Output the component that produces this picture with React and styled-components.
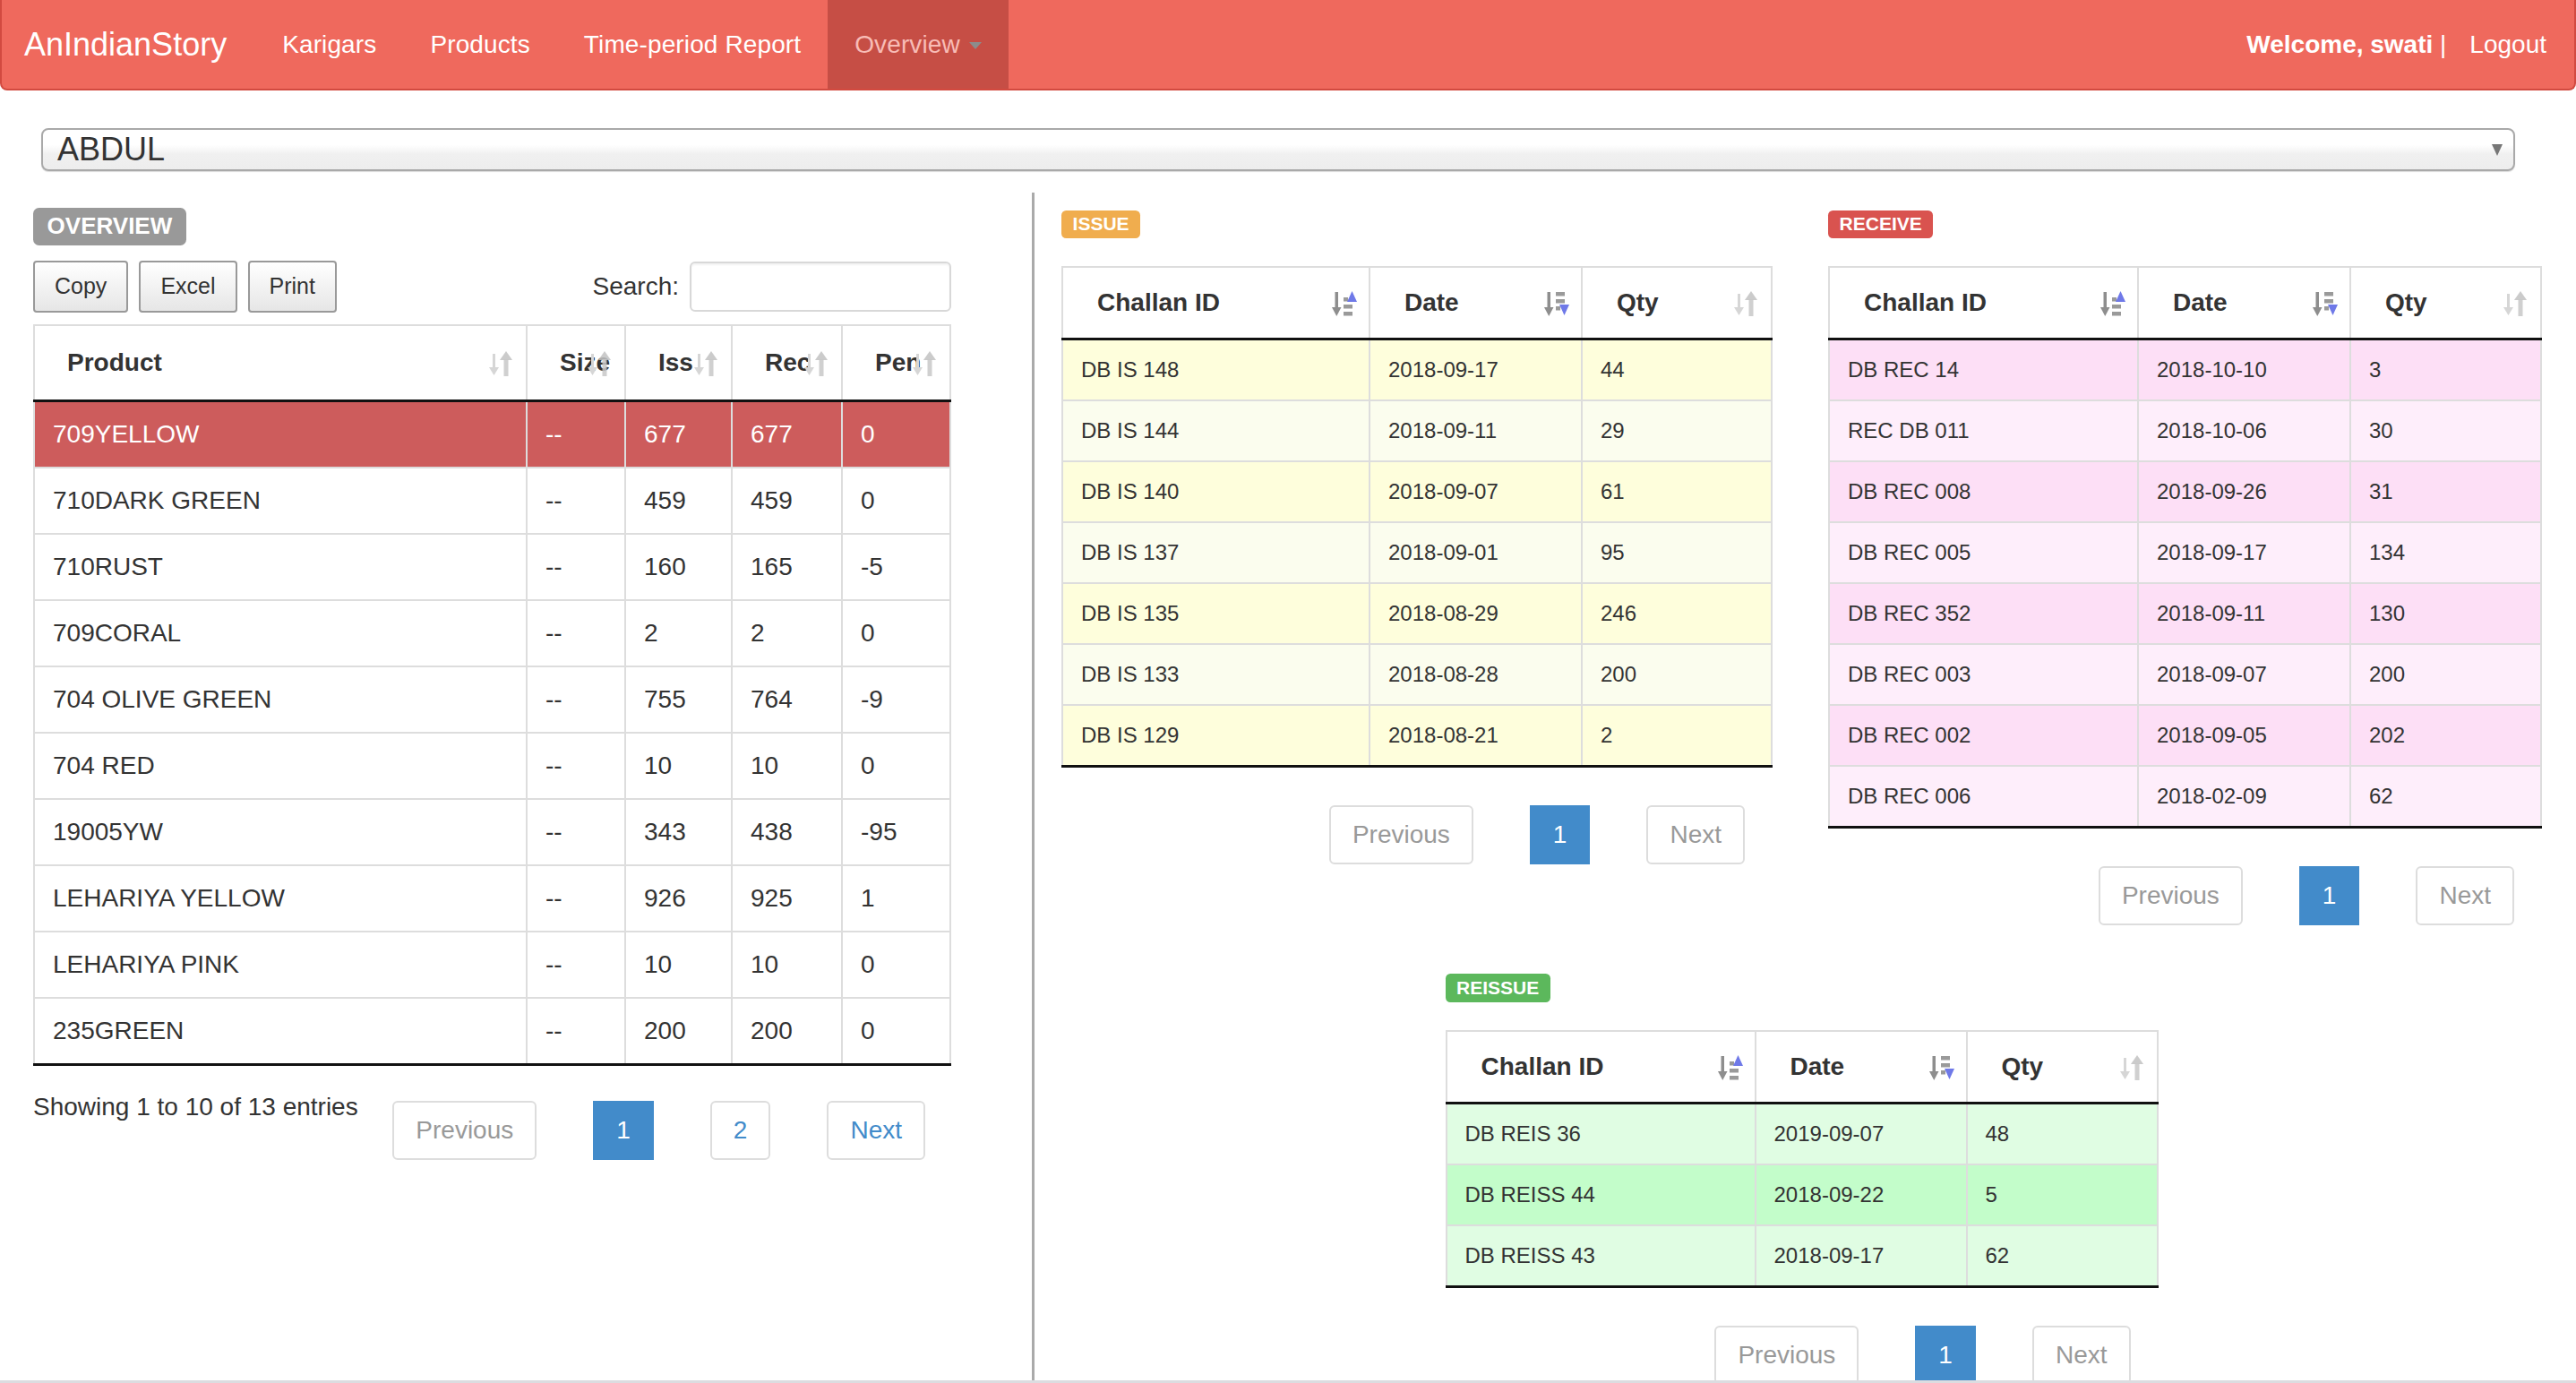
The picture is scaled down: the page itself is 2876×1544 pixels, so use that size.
import React from 'react'
import styled, { createGlobalStyle } from 'styled-components'

const GlobalStyle = createGlobalStyle`
  * { box-sizing: border-box; }
  html, body { margin: 0; padding: 0; background: #fff; }
  body {
    font-family: "Liberation Sans", Arial, Helvetica, sans-serif;
    font-size: 28px;
    line-height: 40px;
    color: #333;
  }
`

const products = [
  ['709YELLOW', '--', '677', '677', '0'],
  ['710DARK GREEN', '--', '459', '459', '0'],
  ['710RUST', '--', '160', '165', '-5'],
  ['709CORAL', '--', '2', '2', '0'],
  ['704 OLIVE GREEN', '--', '755', '764', '-9'],
  ['704 RED', '--', '10', '10', '0'],
  ['19005YW', '--', '343', '438', '-95'],
  ['LEHARIYA YELLOW', '--', '926', '925', '1'],
  ['LEHARIYA PINK', '--', '10', '10', '0'],
  ['235GREEN', '--', '200', '200', '0'],
]

const issues = [
  ['DB IS 148', '2018-09-17', '44'],
  ['DB IS 144', '2018-09-11', '29'],
  ['DB IS 140', '2018-09-07', '61'],
  ['DB IS 137', '2018-09-01', '95'],
  ['DB IS 135', '2018-08-29', '246'],
  ['DB IS 133', '2018-08-28', '200'],
  ['DB IS 129', '2018-08-21', '2'],
]

const receives = [
  ['DB REC 14', '2018-10-10', '3'],
  ['REC DB 011', '2018-10-06', '30'],
  ['DB REC 008', '2018-09-26', '31'],
  ['DB REC 005', '2018-09-17', '134'],
  ['DB REC 352', '2018-09-11', '130'],
  ['DB REC 003', '2018-09-07', '200'],
  ['DB REC 002', '2018-09-05', '202'],
  ['DB REC 006', '2018-02-09', '62'],
]

const reissues = [
  ['DB REIS 36', '2019-09-07', '48'],
  ['DB REISS 44', '2018-09-22', '5'],
  ['DB REISS 43', '2018-09-17', '62'],
]

const SortIcon = ({ dir }) => {
  if (dir === 'asc') {
    return (
      <SortSvg viewBox="0 0 28 32">
        <rect x="3.5" y="3" width="3.5" height="19" fill="#8e8e8e" />
        <polygon points="0,20 10.5,20 5.25,30" fill="#8e8e8e" />
        <rect x="13" y="9" width="5" height="4.5" fill="#9a9a9a" />
        <rect x="13" y="17" width="10" height="4.5" fill="#9a9a9a" />
        <rect x="13" y="25" width="10" height="4.5" fill="#9a9a9a" />
        <polygon points="17,14 28,14 22.5,2" fill="#6f79e8" />
      </SortSvg>
    )
  }
  if (dir === 'desc') {
    return (
      <SortSvg viewBox="0 0 28 32">
        <rect x="3.5" y="3" width="3.5" height="19" fill="#8e8e8e" />
        <polygon points="0,20 10.5,20 5.25,30" fill="#8e8e8e" />
        <rect x="13" y="3" width="10" height="4.5" fill="#9a9a9a" />
        <rect x="13" y="11" width="10" height="4.5" fill="#9a9a9a" />
        <rect x="13" y="19" width="5" height="4.5" fill="#9a9a9a" />
        <polygon points="17,17 28,17 22.5,29" fill="#6f79e8" />
      </SortSvg>
    )
  }
  return (
    <SortSvg viewBox="0 0 28 32">
      <rect x="4" y="5" width="3" height="17" fill="#d6d6d6" />
      <polygon points="0,20 11,20 5.5,29" fill="#d6d6d6" />
      <polygon points="12,12 26,12 19,2" fill="#c2c2c2" opacity="0.85" />
      <rect x="16.5" y="11" width="5" height="19" fill="#c8c8c8" opacity="0.85" />
    </SortSvg>
  )
}

const Pagination = ({ pages, current, nextEnabled }) => (
  <Pager>
    <PageBtn $disabled>Previous</PageBtn>
    {pages.map((p) => (
      <PageBtn key={p} $active={p === current}>{p}</PageBtn>
    ))}
    <PageBtn $disabled={!nextEnabled}>Next</PageBtn>
  </Pager>
)

const ChallanTable = ({ widths, rows, colors }) => (
  <Table $font={24}>
    <colgroup>
      {widths.map((w, i) => <Col key={i} $w={w} />)}
    </colgroup>
    <thead>
      <tr>
        <Th $pad={38}>Challan ID<SortIcon dir="asc" /></Th>
        <Th $pad={38}>Date<SortIcon dir="desc" /></Th>
        <Th $pad={38}>Qty<SortIcon /></Th>
      </tr>
    </thead>
    <tbody>
      {rows.map((r, i) => (
        <Row key={r[0]} $bg={colors[i % colors.length]}>
          {r.map((c, j) => <Td key={j} $lh={34}>{c}</Td>)}
        </Row>
      ))}
    </tbody>
  </Table>
)

const App = () => {
  return (
    <>
      <GlobalStyle />
      <Navbar>
        <NavLeft>
          <Brand>AnIndianStory</Brand>
          <NavLink>Karigars</NavLink>
          <NavLink>Products</NavLink>
          <NavLink>Time-period Report</NavLink>
          <NavLink $active>Overview<Caret /></NavLink>
        </NavLeft>
        <NavRight>
          <Welcome><b>Welcome, swati</b> |</Welcome>
          <Logout>Logout</Logout>
        </NavRight>
      </Navbar>

      <Picker>
        <span>ABDUL</span>
        <PickerArrow />
      </Picker>

      <Main>
        <LeftCol>
          <Label $bg="#999" $big>OVERVIEW</Label>
          <Toolbar>
            <BtnGroup>
              <Btn>Copy</Btn>
              <Btn>Excel</Btn>
              <Btn>Print</Btn>
            </BtnGroup>
            <SearchWrap>
              Search:
              <SearchInput />
            </SearchWrap>
          </Toolbar>
          <Table $font={28}>
            <colgroup>
              {[550, 110, 119, 123, 121].map((w, i) => <Col key={i} $w={w} />)}
            </colgroup>
            <thead>
              <tr>
                {['Product', 'Size', 'Iss', 'Rec', 'Pen'].map((h) => (
                  <Th key={h} $pad={36} $tall>{h}<SortIcon /></Th>
                ))}
              </tr>
            </thead>
            <tbody>
              {products.map((r, i) => (
                <Row key={r[0]} $bg={i === 0 ? '#cd5c5c' : '#fff'} $color={i === 0 ? '#fff' : '#333'}>
                  {r.map((c, j) => <Td key={j} $lh={40}>{c}</Td>)}
                </Row>
              ))}
            </tbody>
          </Table>
          <Footer $tight>
            <Info>Showing 1 to 10 of 13 entries</Info>
            <Pagination pages={[1, 2]} current={1} nextEnabled />
          </Footer>
        </LeftCol>

        <RightCol>
          <Grid>
            <Block>
              <Label $bg="#f0ad4e">ISSUE</Label>
              <TableGap />
              <ChallanTable widths={[343, 237, 212]} rows={issues} colors={['#fefedc', '#fbfdee']} />
              <Footer $end>
                <Pagination pages={[1]} current={1} />
              </Footer>
            </Block>
            <Block>
              <Label $bg="#d9534f">RECEIVE</Label>
              <TableGap />
              <ChallanTable widths={[345, 237, 213]} rows={receives} colors={['#fddff6', '#feeefb']} />
              <Footer $end>
                <Pagination pages={[1]} current={1} />
              </Footer>
            </Block>
            <Block $wide>
              <Label $bg="#5cb85c">REISSUE</Label>
              <TableGap />
              <ChallanTable widths={[345, 236, 213]} rows={reissues} colors={['#e0fde3', '#c3fdca']} />
              <Footer $end>
                <Pagination pages={[1]} current={1} />
              </Footer>
            </Block>
          </Grid>
        </RightCol>
      </Main>
      <BottomEdge />
    </>
  )
}

export default App

const Navbar = styled.nav`
  display: flex;
  justify-content: space-between;
  align-items: stretch;
  height: 101px;
  padding: 0 31px 0 25px;
  background: #ef695d;
  border: 2px solid #d24a40;
  border-top: 0;
  border-radius: 0 0 8px 8px;
`
const NavLeft = styled.div`
  display: flex;
  align-items: stretch;
`
const Brand = styled.div`
  display: flex;
  align-items: center;
  padding-right: 32px;
  font-size: 36px;
  color: #fff;
`
const NavLink = styled.div`
  display: flex;
  align-items: center;
  gap: 10px;
  padding: 0 30px;
  font-size: 28px;
  letter-spacing: 0.12px;
  color: ${(p) => (p.$active ? '#f8bcb6' : '#fff')};
  background: ${(p) => (p.$active ? '#c64e45' : 'transparent')};
`
const Caret = styled.span`
  display: inline-block;
  width: 0;
  height: 0;
  margin-top: 2px;
  border-left: 7px solid transparent;
  border-right: 7px solid transparent;
  border-top: 8px solid #8c8c8c;
`
const NavRight = styled.div`
  display: flex;
  align-items: center;
  color: #fff;
  font-size: 28px;
`
const Welcome = styled.span`
  white-space: pre;
`
const Logout = styled.span`
  margin-left: 26px;
`

const Picker = styled.div`
  display: flex;
  align-items: center;
  justify-content: space-between;
  width: 2762px;
  height: 48px;
  margin: 42px 0 0 46px;
  padding: 0 12px 0 16px;
  border: 2px solid #a9a9a9;
  border-radius: 8px;
  background: linear-gradient(to bottom, #ffffff 0%, #ffffff 38%, #f0f0f0 62%, #ededed 100%);
  box-shadow: 0 1px 1px rgba(0, 0, 0, 0.15);
  font-size: 36px;
  line-height: 44px;
  color: #333;
`
const PickerArrow = styled.span`
  width: 0;
  height: 0;
  border-left: 6px solid transparent;
  border-right: 6px solid transparent;
  border-top: 13px solid #777;
`

const Main = styled.div`
  display: flex;
  margin-top: 24px;
`
const LeftCol = styled.div`
  flex: 0 0 1150px;
  padding: 17px 90px 0 37px;
`
const RightCol = styled.div`
  flex: 1;
  min-height: 1340px;
  padding: 20px 42px 0 30px;
  border-left: 3px solid #aaa;
`

const Label = styled.div`
  display: block;
  width: fit-content;
  padding: ${(p) => (p.$big ? '0.25em 0.6em 0.35em' : '0.2em 0.6em 0.3em')};
  border-radius: 0.25em;
  background: ${(p) => p.$bg};
  color: #fff;
  font-weight: 700;
  font-size: ${(p) => (p.$big ? 26 : 21)}px;
  line-height: 1;
`
const TableGap = styled.div`
  height: 31px;
`

const Toolbar = styled.div`
  display: flex;
  justify-content: space-between;
  align-items: center;
  height: 58px;
  margin: 17px 0 13px;
`
const BtnGroup = styled.div`
  display: flex;
  gap: 12px;
`
const Btn = styled.button`
  height: 58px;
  padding: 0 22px;
  border: 2px solid #999;
  border-radius: 4px;
  background: linear-gradient(to bottom, #ffffff 0%, #e6e6e6 100%);
  font-family: inherit;
  font-size: 25px;
  color: #333;
`
const SearchWrap = styled.label`
  display: flex;
  align-items: center;
  gap: 12px;
  font-size: 28px;
`
const SearchInput = styled.input`
  width: 292px;
  height: 56px;
  border: 2px solid #d8d8d8;
  border-radius: 6px;
  box-shadow: inset 0 2px 2px rgba(0, 0, 0, 0.05);
  outline: 0;
`

const Table = styled.table`
  width: 100%;
  table-layout: fixed;
  border-collapse: collapse;
  border: 2px solid #ddd;
  border-bottom: 3px solid #111;
  font-size: ${(p) => p.$font}px;
`
const Col = styled.col`
  width: ${(p) => p.$w}px;
`
const Th = styled.th`
  position: relative;
  padding: ${(p) => (p.$tall ? 21 : 19)}px 40px ${(p) => (p.$tall ? 21 : 19)}px ${(p) => p.$pad}px;
  border: 2px solid #ddd;
  border-bottom: 3px solid #111;
  text-align: left;
  font-size: 28px;
  line-height: 40px;
  font-weight: 700;
  white-space: nowrap;
  color: #333;
  background: #fff;
`
const SortSvg = styled.svg`
  position: absolute;
  right: 13px;
  top: 50%;
  width: 28px;
  height: 32px;
  margin-top: -15px;
`
const Row = styled.tr`
  background: ${(p) => p.$bg};
  color: ${(p) => p.$color || '#333'};
`
const Td = styled.td`
  padding: 16px 20px;
  border: 2px solid #ddd;
  line-height: ${(p) => p.$lh}px;
  white-space: nowrap;
`

const Footer = styled.div`
  display: flex;
  justify-content: ${(p) => (p.$end ? 'flex-end' : 'space-between')};
  align-items: flex-start;
  margin-top: ${(p) => (p.$tight ? 26 : 29)}px;
`
const Info = styled.div`
  font-size: 28px;
  line-height: 40px;
`
const Pager = styled.div`
  display: flex;
  gap: 63px;
  margin-top: 13px;
  padding-right: 29px;
`
const PageBtn = styled.span`
  display: block;
  height: 66px;
  padding: 0 24px;
  border: 2px solid ${(p) => (p.$active ? '#428bca' : '#ddd')};
  border-radius: ${(p) => (p.$active ? 0 : 6)}px;
  background: ${(p) => (p.$active ? '#428bca' : '#fff')};
  color: ${(p) => (p.$active ? '#fff' : p.$disabled ? '#999' : '#428bca')};
  font-size: 28px;
  line-height: 62px;
`

const Grid = styled.div`
  display: grid;
  grid-template-columns: 792px 795px;
  column-gap: 64px;
  row-gap: 54px;
  align-items: start;
`
const Block = styled.section`
  ${(p) => p.$wide && 'grid-column: 1 / -1; justify-self: center; width: 794px;'}
`

const BottomEdge = styled.div`
  position: fixed;
  left: 0;
  right: 0;
  bottom: 0;
  height: 3px;
  background: #dcdce0;
`
